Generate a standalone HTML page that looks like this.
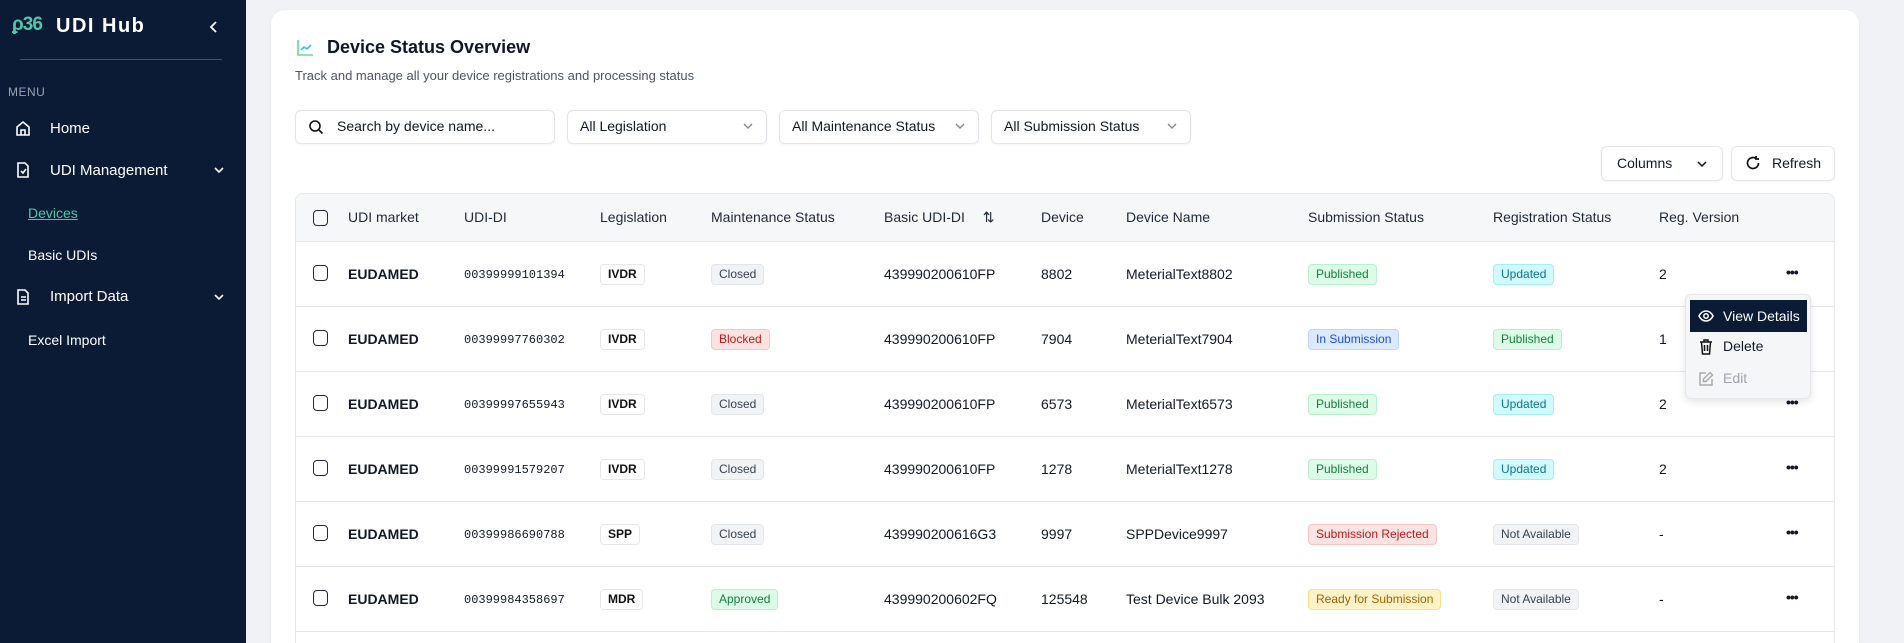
<!DOCTYPE html>
<html><head><meta charset="utf-8"><style>
*{box-sizing:border-box;margin:0;padding:0}
html{width:1904px;height:643px;overflow:hidden}
body{width:1904px;height:643px;overflow:hidden;background:#f0f2f5;font-family:"Liberation Sans",sans-serif;color:#111827;position:relative}
.sb{position:absolute;left:0;top:0;width:246px;height:643px;background:#0b1a35;color:#fff}
.abs{position:absolute}
.nav{position:absolute;left:50px;font-size:15px;color:#fff}
.ico{position:absolute;left:14px}
.card{position:absolute;left:271px;top:10px;width:1588px;height:633px;background:#fff;border-radius:14px 14px 0 0;box-shadow:0 1px 3px rgba(0,0,0,.06)}
.inp{position:absolute;top:110px;height:34px;border:1.5px solid #e2e5ea;border-radius:6px;font-size:14px;line-height:31px;padding-left:12px;box-shadow:0 1px 2px rgba(0,0,0,.05)}
.chev{position:absolute;right:12px;top:10px}
.tbl{position:absolute;left:295px;top:193px;width:1540px;height:450px;border:1px solid #e5e7eb;border-bottom:none;border-radius:8px 8px 0 0;overflow:hidden}
.hd{position:absolute;left:0;top:0;width:100%;height:48px;background:#f6f7f9;border-bottom:1px solid #e5e7eb}
.row{position:absolute;left:0;width:100%;height:65px;border-bottom:1px solid #e5e7eb}
.c{position:absolute;font-size:14px;white-space:nowrap}
.hd .c{top:15px;font-weight:500;color:#1f2937}
.row .c{top:24px}
.cb{position:absolute;left:17px;width:15px;height:16px;border:1.5px solid #1f2937;border-radius:4px}
.mono{font-family:"Liberation Mono",monospace;font-size:12px!important;top:26px!important}
.b{display:inline-block;font-size:12px;padding:2px 7px;border-radius:4px;border:1px solid;line-height:15px;position:relative;top:-2px}
.lg{background:#fff;border-color:#e5e7eb;color:#111;font-weight:bold}
.gr{background:#f1f3f6;border-color:#e2e6ec;color:#374151}
.rd{background:#fde2e2;border-color:#fbc4c4;color:#b91c1c}
.gn{background:#dcfce7;border-color:#bbf0cc;color:#15803d}
.cy{background:#cffafe;border-color:#a5eef8;color:#0e7490}
.bl{background:#dbeafe;border-color:#bcd5fb;color:#1d4ed8}
.yl{background:#fef3c7;border-color:#fce08a;color:#a16207}
.dots{position:absolute;left:1490px;top:22px;font-size:14px;font-weight:bold;letter-spacing:-1px}
</style></head><body>
<div class="sb">
 <div class="abs" style="left:12px;top:14px;font-size:19px;font-weight:bold;color:#4ec9a8;letter-spacing:-1px">ϼ36</div>
 <div class="abs" style="left:56px;top:15px;font-size:20px;font-weight:bold;letter-spacing:1.5px">UDI Hub</div>
 <svg class="abs" style="left:208px;top:20px" width="12" height="14" viewBox="0 0 12 14"><path d="M8 2L3 7l5 5" stroke="#fff" stroke-width="1.8" fill="none"/></svg>
 <div class="abs" style="left:20px;top:59px;width:202px;height:1px;background:#2b5d72"></div>
 <div class="abs" style="left:8px;top:85px;font-size:12px;color:#9aa3b2;letter-spacing:.5px">MENU</div>
 <svg class="ico" style="top:119px" width="18" height="18" viewBox="0 0 18 18" fill="none" stroke="#fff" stroke-width="1.6"><path d="M3 8l6-5 6 5v8H3z"/><path d="M7 16v-5h4v5"/></svg>
 <div class="nav" style="top:120px">Home</div>
 <svg class="ico" style="top:161px" width="18" height="18" viewBox="0 0 18 18" fill="none" stroke="#fff" stroke-width="1.6"><path d="M4 2h7l3 3v11H4z"/><path d="M7 10l2 2 3-4"/></svg>
 <div class="nav" style="top:162px">UDI Management</div>
 <svg class="abs" style="left:213px;top:165px" width="12" height="10" viewBox="0 0 12 10"><path d="M2 3l4 4 4-4" stroke="#fff" stroke-width="1.6" fill="none"/></svg>
 <div class="abs" style="left:28px;top:205px;font-size:14px;color:#4ec9a8;text-decoration:underline">Devices</div>
 <div class="abs" style="left:28px;top:247px;font-size:14px">Basic UDIs</div>
 <svg class="ico" style="top:288px" width="18" height="18" viewBox="0 0 18 18" fill="none" stroke="#fff" stroke-width="1.6"><path d="M4 2h7l3 3v11H4z"/><path d="M7 9h5M7 12h5"/></svg>
 <div class="nav" style="top:288px">Import Data</div>
 <svg class="abs" style="left:213px;top:292px" width="12" height="10" viewBox="0 0 12 10"><path d="M2 3l4 4 4-4" stroke="#fff" stroke-width="1.6" fill="none"/></svg>
 <div class="abs" style="left:28px;top:332px;font-size:14px">Excel Import</div>
</div>
<div class="card"></div>
<svg class="abs" style="left:296px;top:39px" width="18" height="18" viewBox="0 0 18 18" fill="none" stroke-width="1.6"><path d="M2 1v15h15" stroke="#5ddba0"/><path d="M5 11l3-3 3 2 4-4" stroke="#38bdf8"/></svg>
<div class="abs" style="left:327px;top:37px;font-size:18px;font-weight:bold;color:#0f172a">Device Status Overview</div>
<div class="abs" style="left:295px;top:68px;font-size:13px;color:#4b5563">Track and manage all your device registrations and processing status</div>
<div class="inp" style="left:295px;width:260px;padding-left:41px">Search by device name...
 <svg class="abs" style="left:12px;top:8px" width="16" height="16" viewBox="0 0 16 16" fill="none" stroke="#111" stroke-width="1.6"><circle cx="7" cy="7" r="5"/><path d="M11 11l3.5 3.5"/></svg></div>
<div class="inp" style="left:567px;width:200px">All Legislation<svg class="chev" width="12" height="10" viewBox="0 0 12 10"><path d="M2 3l4 4 4-4" stroke="#888" stroke-width="1.4" fill="none"/></svg></div>
<div class="inp" style="left:779px;width:200px">All Maintenance Status<svg class="chev" width="12" height="10" viewBox="0 0 12 10"><path d="M2 3l4 4 4-4" stroke="#888" stroke-width="1.4" fill="none"/></svg></div>
<div class="inp" style="left:991px;width:200px">All Submission Status<svg class="chev" width="12" height="10" viewBox="0 0 12 10"><path d="M2 3l4 4 4-4" stroke="#888" stroke-width="1.4" fill="none"/></svg></div>
<div class="inp" style="left:1601px;top:146px;width:122px;height:35px;line-height:32px;padding-left:15px;font-weight:500">Columns<svg class="chev" style="right:14px;top:12px" width="12" height="10" viewBox="0 0 12 10"><path d="M2 3l4 4 4-4" stroke="#111" stroke-width="1.5" fill="none"/></svg></div>
<div class="inp" style="left:1731px;top:146px;width:104px;height:35px;line-height:32px;padding-left:40px;font-weight:500">Refresh<svg class="abs" style="left:13px;top:8px" width="16" height="16" viewBox="0 0 16 16" fill="none" stroke="#111" stroke-width="1.7"><path d="M13.5 8A5.5 5.5 0 1 1 11 3.4"/><path d="M11 1v3h3"/></svg></div>
<div class="tbl">
 <div class="hd"><div class="cb" style="top:16px"></div>
  <div class="c" style="left:52px">UDI market</div><div class="c" style="left:168px">UDI-DI</div><div class="c" style="left:304px">Legislation</div><div class="c" style="left:415px">Maintenance Status</div><div class="c" style="left:588px">Basic UDI-DI <span style="margin-left:14px">⇅</span></div><div class="c" style="left:745px">Device</div><div class="c" style="left:830px">Device Name</div><div class="c" style="left:1012px">Submission Status</div><div class="c" style="left:1197px">Registration Status</div><div class="c" style="left:1363px">Reg. Version</div>
 </div>
 <div class="row" style="top:48px"><div class="cb" style="top:23px"></div><div class="c" style="left:52px;font-weight:bold">EUDAMED</div><div class="c mono" style="left:168px">00399999101394</div><div class="c" style="left:304px"><span class="b lg">IVDR</span></div><div class="c" style="left:415px"><span class="b gr">Closed</span></div><div class="c" style="left:588px">439990200610FP</div><div class="c" style="left:745px">8802</div><div class="c" style="left:830px">MeterialText8802</div><div class="c" style="left:1012px"><span class="b gn">Published</span></div><div class="c" style="left:1197px"><span class="b cy">Updated</span></div><div class="c" style="left:1363px">2</div><div class="dots">•••</div></div>
 <div class="row" style="top:113px"><div class="cb" style="top:23px"></div><div class="c" style="left:52px;font-weight:bold">EUDAMED</div><div class="c mono" style="left:168px">00399997760302</div><div class="c" style="left:304px"><span class="b lg">IVDR</span></div><div class="c" style="left:415px"><span class="b rd">Blocked</span></div><div class="c" style="left:588px">439990200610FP</div><div class="c" style="left:745px">7904</div><div class="c" style="left:830px">MeterialText7904</div><div class="c" style="left:1012px"><span class="b bl">In Submission</span></div><div class="c" style="left:1197px"><span class="b gn">Published</span></div><div class="c" style="left:1363px">1</div></div>
 <div class="row" style="top:178px"><div class="cb" style="top:23px"></div><div class="c" style="left:52px;font-weight:bold">EUDAMED</div><div class="c mono" style="left:168px">00399997655943</div><div class="c" style="left:304px"><span class="b lg">IVDR</span></div><div class="c" style="left:415px"><span class="b gr">Closed</span></div><div class="c" style="left:588px">439990200610FP</div><div class="c" style="left:745px">6573</div><div class="c" style="left:830px">MeterialText6573</div><div class="c" style="left:1012px"><span class="b gn">Published</span></div><div class="c" style="left:1197px"><span class="b cy">Updated</span></div><div class="c" style="left:1363px">2</div><div class="dots">•••</div></div>
 <div class="row" style="top:243px"><div class="cb" style="top:23px"></div><div class="c" style="left:52px;font-weight:bold">EUDAMED</div><div class="c mono" style="left:168px">00399991579207</div><div class="c" style="left:304px"><span class="b lg">IVDR</span></div><div class="c" style="left:415px"><span class="b gr">Closed</span></div><div class="c" style="left:588px">439990200610FP</div><div class="c" style="left:745px">1278</div><div class="c" style="left:830px">MeterialText1278</div><div class="c" style="left:1012px"><span class="b gn">Published</span></div><div class="c" style="left:1197px"><span class="b cy">Updated</span></div><div class="c" style="left:1363px">2</div><div class="dots">•••</div></div>
 <div class="row" style="top:308px"><div class="cb" style="top:23px"></div><div class="c" style="left:52px;font-weight:bold">EUDAMED</div><div class="c mono" style="left:168px">00399986690788</div><div class="c" style="left:304px"><span class="b lg">SPP</span></div><div class="c" style="left:415px"><span class="b gr">Closed</span></div><div class="c" style="left:588px">439990200616G3</div><div class="c" style="left:745px">9997</div><div class="c" style="left:830px">SPPDevice9997</div><div class="c" style="left:1012px"><span class="b rd">Submission Rejected</span></div><div class="c" style="left:1197px"><span class="b gr">Not Available</span></div><div class="c" style="left:1363px">-</div><div class="dots">•••</div></div>
 <div class="row" style="top:373px"><div class="cb" style="top:23px"></div><div class="c" style="left:52px;font-weight:bold">EUDAMED</div><div class="c mono" style="left:168px">00399984358697</div><div class="c" style="left:304px"><span class="b lg">MDR</span></div><div class="c" style="left:415px"><span class="b gn">Approved</span></div><div class="c" style="left:588px">439990200602FQ</div><div class="c" style="left:745px">125548</div><div class="c" style="left:830px">Test Device Bulk 2093</div><div class="c" style="left:1012px"><span class="b yl">Ready for Submission</span></div><div class="c" style="left:1197px"><span class="b gr">Not Available</span></div><div class="c" style="left:1363px">-</div><div class="dots">•••</div></div>
</div>
<div class="abs" style="left:1685px;top:294px;width:126px;height:105px;background:#f5f6f8;border:1px solid #e5e7eb;border-radius:6px;box-shadow:0 3px 8px rgba(0,0,0,.1)">
 <div class="abs" style="left:4px;top:5px;width:117px;height:32px;background:#0b1a35;color:#fff;font-size:14px;line-height:32px;padding-left:33px">View Details
  <svg class="abs" style="left:8px;top:9px" width="16" height="14" viewBox="0 0 16 14" fill="none" stroke="#fff" stroke-width="1.5"><path d="M1 7c2-4 5-5 7-5s5 1 7 5c-2 4-5 5-7 5s-5-1-7-5z"/><circle cx="8" cy="7" r="2.2"/></svg></div>
 <svg class="abs" style="left:13px;top:44px" width="14" height="16" viewBox="0 0 14 16" fill="none" stroke="#111" stroke-width="1.5"><path d="M1 3h12M5 3V1h4v2M2.5 3l1 12h7l1-12M5.5 6v6M8.5 6v6"/></svg>
 <div class="abs" style="left:37px;top:43px;font-size:14px">Delete</div>
 <svg class="abs" style="left:12px;top:76px" width="16" height="16" viewBox="0 0 16 16" fill="none" stroke="#aaa" stroke-width="1.5"><path d="M8 2H2v12h12V8"/><path d="M12 1.5l2.5 2.5L8 10.5H5.5V8z"/></svg>
 <div class="abs" style="left:37px;top:75px;font-size:14px;color:#a0a4ab">Edit</div>
</div>
</body></html>
